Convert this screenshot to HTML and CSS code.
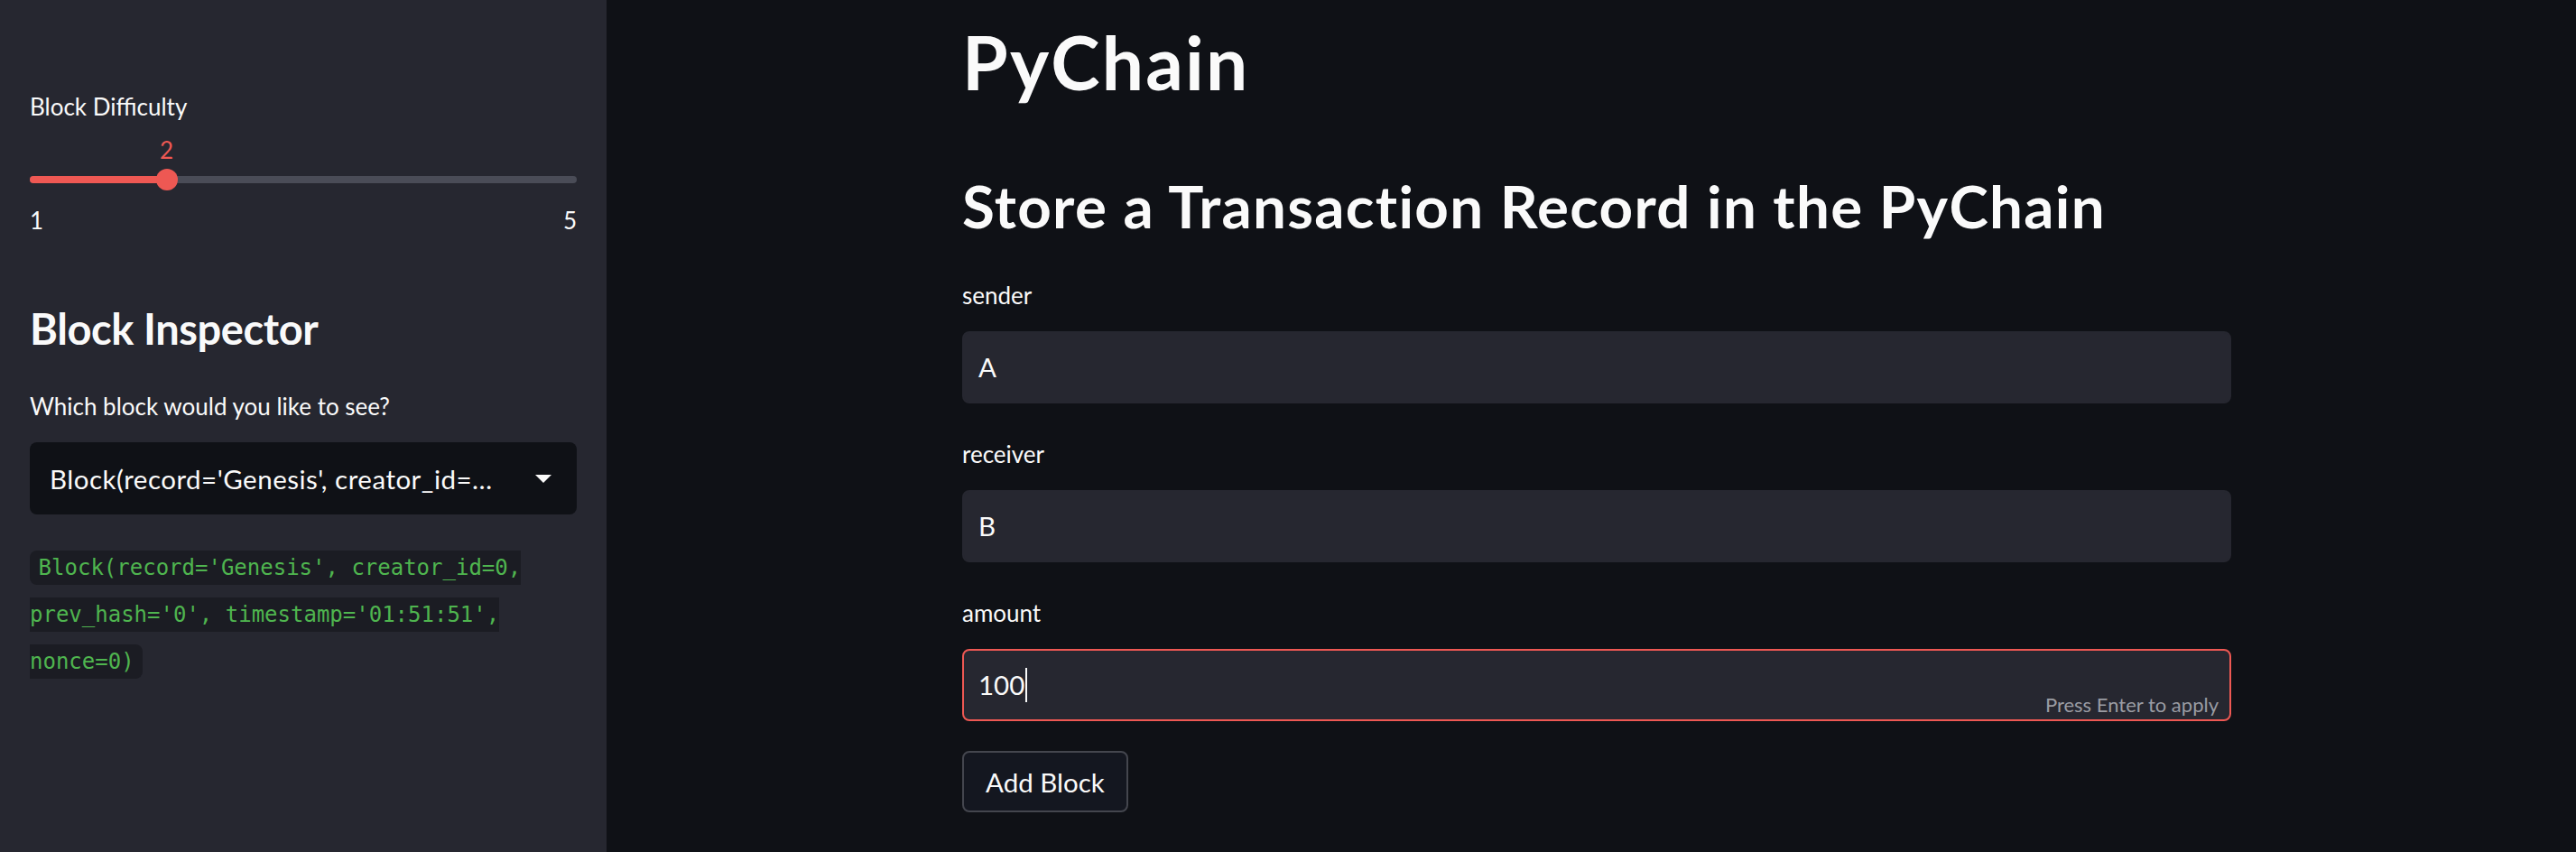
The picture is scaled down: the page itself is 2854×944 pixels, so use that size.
FILE: index.html
```html
<!DOCTYPE html>
<html lang="en">
<head>
<meta charset="utf-8">
<title>PyChain</title>
<link rel="stylesheet" href="styles.css">
</head>
<body>
<div class="app">
  <aside class="sidebar">
    <div class="label">Block Difficulty</div>
    <div class="slider">
      <div class="slider-value-row">
        <span class="slider-value" style="left: 25%">2</span>
      </div>
      <div class="slider-track-wrap">
        <div class="slider-track">
          <div class="slider-fill" style="width: 25%"></div>
        </div>
        <span class="slider-thumb" style="left: 25%"></span>
      </div>
      <div class="slider-ticks">
        <span>1</span>
        <span>5</span>
      </div>
    </div>

    <h2 class="side-heading">Block Inspector</h2>
    <div class="label label-select">Which block would you like to see?</div>
    <div class="select">
      <span class="select-text">Block(record='Genesis', creator_id=0, prev_hash='0', timestamp='01:51:51', nonce=0)</span>
      <svg class="select-arrow" width="18" height="9" viewBox="0 0 18 9"><path d="M0 0 L18 0 L9 9 Z" fill="#fafafa"/></svg>
    </div>
    <p class="code-para"><code class="inline-code">Block(record='Genesis', creator_id=0, prev_hash='0', timestamp='01:51:51', nonce=0)</code></p>
  </aside>

  <main class="main">
    <div class="content">
      <h1 class="title">PyChain</h1>
      <h2 class="subtitle">Store a Transaction Record in the PyChain</h2>

      <div class="field">
        <div class="label">sender</div>
        <div class="input"><span class="input-text">A</span></div>
      </div>
      <div class="field">
        <div class="label">receiver</div>
        <div class="input"><span class="input-text">B</span></div>
      </div>
      <div class="field">
        <div class="label">amount</div>
        <div class="input input-focused">
          <span class="input-text">100</span><span class="caret"></span>
          <span class="input-hint">Press Enter to apply</span>
        </div>
      </div>

      <button class="btn">Add Block</button>
    </div>
  </main>
</div>
</body>
</html>
```

FILE: styles.css
```css
* {
  box-sizing: border-box;
}

html, body {
  margin: 0;
  padding: 0;
  background: #0f1116;
}

body {
  font-family: Lato, "Noto Sans", sans-serif;
  color: #fafafa;
  width: 2854px;
  height: 944px;
  overflow: hidden;
}

.app {
  display: flex;
  height: 944px;
}

/* ---------- Sidebar ---------- */
.sidebar {
  width: 672px;
  flex: 0 0 672px;
  background: #262730;
  padding: 100px 33px 0 33px;
}

.label {
  font-size: 26px;
  line-height: 36px;
  height: 36px;
  color: #fafafa;
}

.slider {
  display: flex;
  flex-direction: column;
}

.slider-value-row {
  position: relative;
  height: 36px;
  margin-top: 12px;
}

.slider-value {
  position: absolute;
  top: 0;
  transform: translateX(-50%);
  font-size: 26px;
  line-height: 36px;
  color: #ee5853;
}

.slider-track-wrap {
  position: relative;
  height: 24px;
  margin-top: 3px;
  display: flex;
  align-items: center;
}

.slider-track {
  width: 100%;
  height: 8px;
  border-radius: 4px;
  background: #4a4c57;
  overflow: hidden;
}

.slider-fill {
  height: 100%;
  background: #ee5853;
}

.slider-thumb {
  position: absolute;
  top: 0;
  width: 24px;
  height: 24px;
  border-radius: 50%;
  background: #ee5853;
  transform: translateX(-50%);
}

.slider-ticks {
  display: flex;
  justify-content: space-between;
  margin-top: 15px;
  font-size: 26px;
  line-height: 36px;
}

.side-heading {
  margin: 72px 0 0 0;
  font-size: 47px;
  line-height: 60px;
  font-weight: 700;
  letter-spacing: -0.4px;
}

.label-select {
  margin-top: 38px;
}

.select {
  margin-top: 22px;
  height: 80px;
  background: #0f1116;
  border-radius: 8px;
  display: flex;
  align-items: center;
  padding: 0 28px 0 22px;
}

.select-text {
  flex: 1;
  min-width: 0;
  font-size: 29.5px;
  letter-spacing: 0.5px;
  white-space: nowrap;
  overflow: hidden;
  text-overflow: ellipsis;
  margin-right: 31px;
}

.select-arrow {
  flex: 0 0 18px;
}

.code-para {
  margin: 34px 0 0 0;
  line-height: 50px;
}

.inline-code {
  font-family: "DejaVu Sans Mono", "Liberation Mono", monospace;
  font-size: 24px;
  color: #4fb54f;
  background: #1b1c23;
  padding: 5px 9.6px;
  border-radius: 8px;
}

/* ---------- Main ---------- */
.main {
  flex: 1;
  background: #0f1116;
}

.content {
  width: 1406px;
  margin-left: 394px;
  padding-top: 18px;
}

.title {
  margin: 0;
  font-size: 82px;
  line-height: 100px;
  font-weight: 700;
  letter-spacing: 2.2px;
}

.subtitle {
  margin: 68px 0 0 0;
  font-size: 65.5px;
  line-height: 84px;
  font-weight: 700;
  letter-spacing: 1.3px;
}

.field {
  margin-top: 39px;
}

.field + .field {
  margin-top: 38px;
}

.input {
  position: relative;
  margin-top: 22px;
  height: 80px;
  background: #262730;
  border: 2px solid #262730;
  border-radius: 8px;
  padding: 0 16px;
  display: flex;
  align-items: center;
}

.input-text {
  font-size: 29.5px;
  line-height: 40px;
}

.input-focused {
  border-color: #ee5853;
}

.caret {
  display: inline-block;
  width: 2px;
  height: 38px;
  background: #fafafa;
  margin-left: 1px;
}

.input-hint {
  position: absolute;
  right: 12px;
  bottom: 2px;
  font-size: 22px;
  line-height: 28px;
  color: #9a9ca3;
}

.btn {
  margin-top: 33px;
  height: 68px;
  padding: 0 24px;
  background: #141720;
  color: #fafafa;
  border: 2px solid #44464e;
  border-radius: 8px;
  font-family: Lato, "Noto Sans", sans-serif;
  font-size: 29.5px;
}
```
